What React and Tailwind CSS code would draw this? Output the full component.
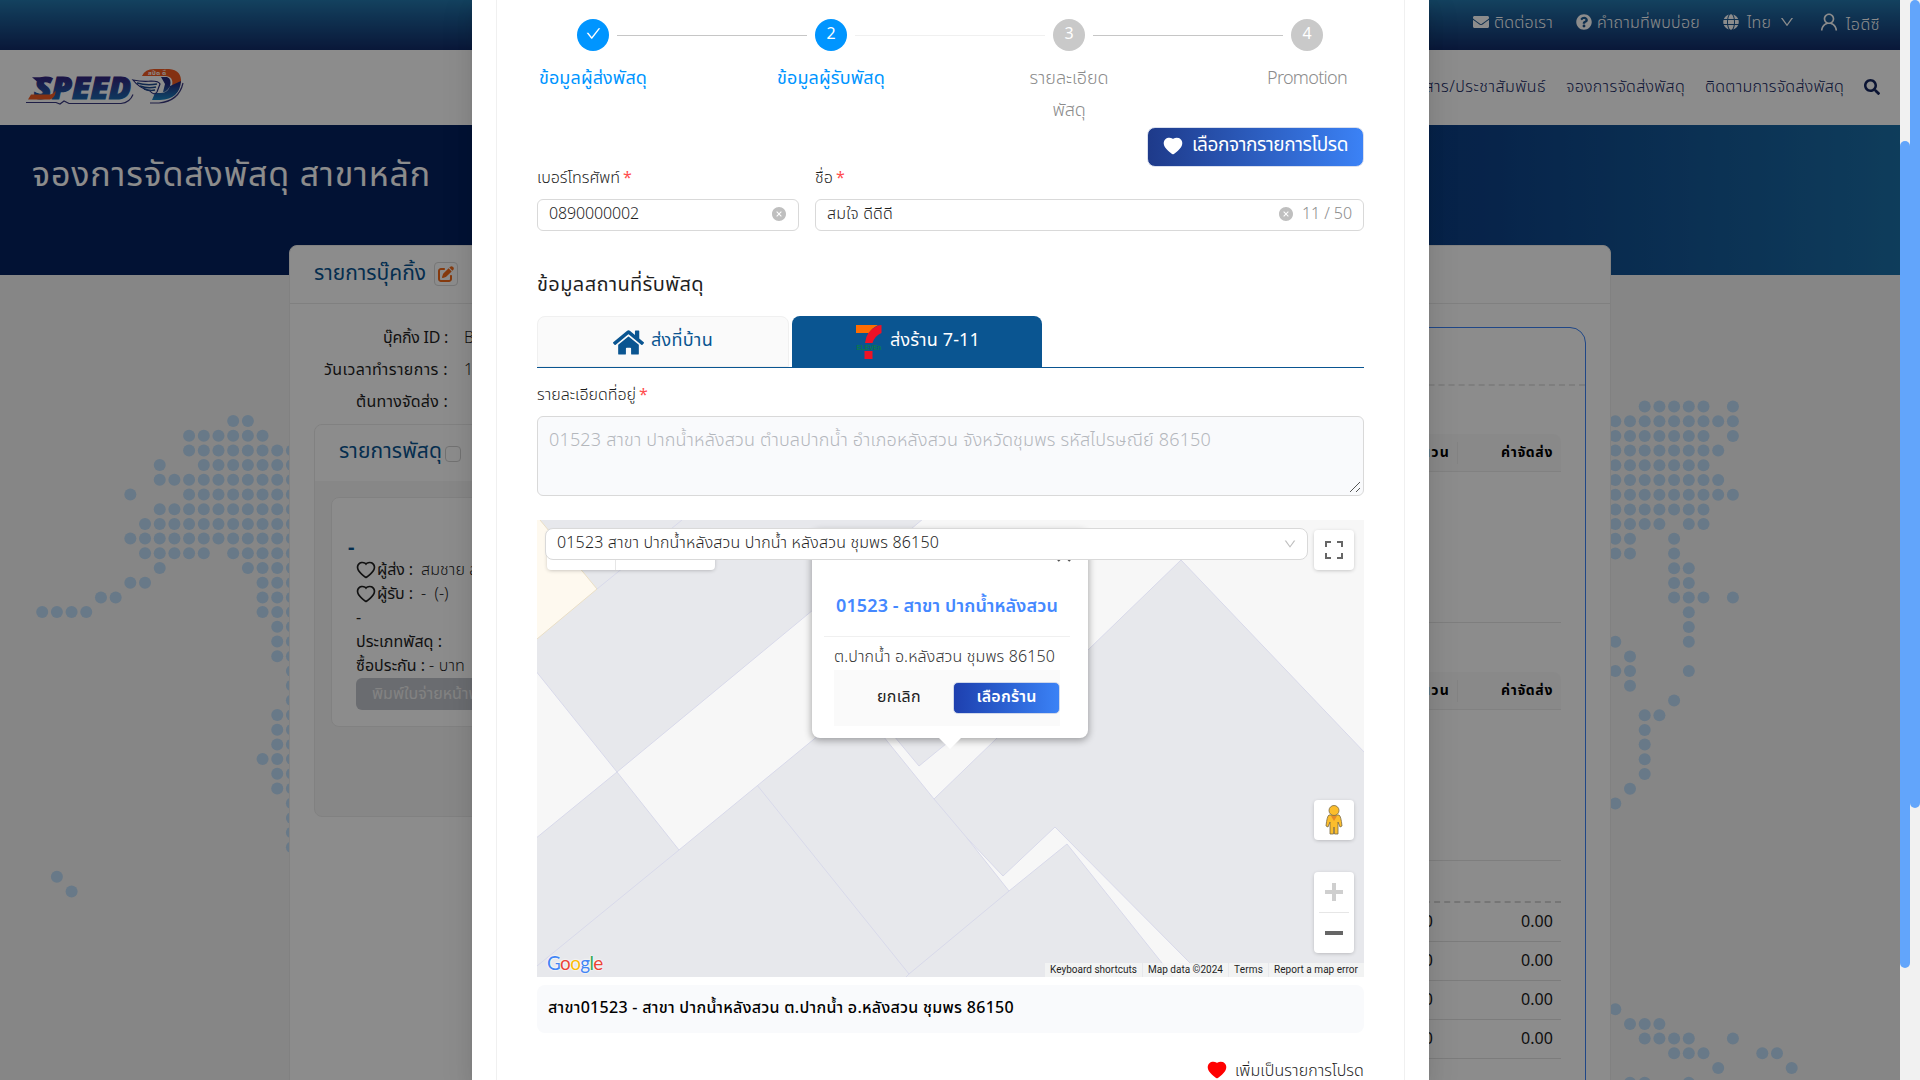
import React, { useLayoutEffect, useRef, useState } from "react";
import { FaEnvelope, FaQuestionCircle, FaGlobe, FaSearch, FaHome } from "react-icons/fa";
import { FaPenToSquare } from "react-icons/fa6";
import {
  AiOutlineUser,
  AiOutlineDown,
  AiOutlineCheck,
  AiFillCloseCircle,
  AiFillHeart,
  AiOutlineHeart,
} from "react-icons/ai";

/* Text whose letter spacing is computed so that it fills the given width. */
function T({ w, className = "", children }) {
  const ref = useRef(null);
  const [ls, setLs] = useState(0);
  useLayoutEffect(() => {
    if (!w || !ref.current) return;
    const el = ref.current;
    el.style.letterSpacing = "0px";
    const a = el.getBoundingClientRect().width;
    el.style.letterSpacing = "1px";
    const b = el.getBoundingClientRect().width;
    const next = b > a ? (w - a) / (b - a) : 0;
    el.style.letterSpacing = next + "px";
    setLs(next);
  }, [w]);
  return (
    <span ref={ref} className={"inline-block whitespace-nowrap " + className} style={{ letterSpacing: ls + "px" }}>
      {children}
    </span>
  );
}

const span = (a, b) => Array.from({ length: b - a + 1 }, (_, i) => a + i);
const LEFT_DOTS = [
  [13, 14], span(10, 15), span(10, 17), [8, ...span(11, 17)], span(8, 17), [6, ...span(10, 17)],
  span(8, 17), span(7, 17), span(6, 17), [...span(7, 11), ...span(13, 17)], [8, ...span(14, 17)],
  [6, 7, 15, 16, 17], [4, 5, 15, 16, 17], [0, 1, 2, 3, 15, 16, 17], [16, 17], [16, 17], [16, 17],
  [17], [17], [17], [16, 17], [16, 17], [16, 17], [15, 16, 17], [16, 17], [16, 17],
  [17], [17], [17], [17], [], [1], [2],
];
const RIGHT_DOTS = [
  [2, 3, 4, 5, 6, 8], span(0, 8), [...span(0, 6), 8], span(0, 7), span(0, 6), span(0, 7), span(0, 8),
  span(0, 6), [0, 1, 2, 3, 5, 6], [0, 1, 4], [0, 1, 4], [4, 5], [4, 5], [4, 5, 6, 8], [5], [5],
  [0, 5], [1], [0, 1, 5], [1], [4], [2, 3], [2], [2], [2], [2], [1], [0],
  [], [], [], [], [], [], [], [], [], [], [], [], [],
  [0], [1, 2, 3], [2, 3, 4, 5, 8], [4, 5, 6, 10, 11], [7, 12], [1, 2, 5],
];

function WorldDots() {
  return (
    <svg className="absolute inset-0" width="1900" height="1080" fill="#bddcf7">
      {LEFT_DOTS.map((r, j) => r.map((c) => <circle key={"l" + j + "-" + c} cx={42.2 + c * 14.69} cy={421 + j * 14.7} r="6" />))}
      {RIGHT_DOTS.map((r, j) => r.map((c) => <circle key={"r" + j + "-" + c} cx={1615.3 + c * 14.7} cy={406.5 + j * 14.7} r="6" />))}
    </svg>
  );
}

function Logo() {
  return (
    <svg width="160" height="44" viewBox="0 -2 160 44" className="overflow-visible">
      <defs>
        <linearGradient id="spd" x1="0" y1="0" x2="0" y2="1">
          <stop offset="0.25" stopColor="#33257f" />
          <stop offset="0.9" stopColor="#1773b5" />
        </linearGradient>
        <linearGradient id="dee" x1="0" y1="0" x2="0" y2="1">
          <stop offset="0.3" stopColor="#232a7c" />
          <stop offset="1" stopColor="#1c86c4" />
        </linearGradient>
      </defs>
      <path d="M6 8H101l8 5-3 15-8 6H44l-3 2H38l-4-2H1l4-9 6-5z" fill="#fff" />
      <path d="M1 34.500H31l4 1.500 4-3 5 2.500H96q9-1 12-9" fill="none" stroke="#3a3a80" strokeWidth="1.200" />
      <path d="M7 9.200h18l-3 4.300H12z" fill="#33257f" />
      <text x="9" y="31" fontFamily="'Noto Sans','Open Sans',sans-serif" fontWeight="900" fontStyle="italic" fontSize="29.500" textLength="97" lengthAdjust="spacingAndGlyphs" fill="url(#spd)" stroke="url(#spd)" strokeWidth="1.200">SPEED</text>
      <path d="M6 26.500H25Q29 26 30.500 22.500 31 28 27 30.500L25 31.500H3z" fill="#f05a22" />
      <path d="M118 7q4-7 13-7h14q13 1 13 12-1 10-8 17-7 6-16 6h-9" fill="#fff" />
      <path d="M125 35h9q20-2 24-20" fill="none" stroke="#3a3a80" strokeWidth="1.200" />
      <path d="M117 8q3-7 12-7h15q13 1 12 14l-9 3q2-10-7-10z" fill="#f05a22" />
      <path d="M136 9h6q5 2 3 9-3 6-7 6l2-8zM145 18l11-5q-1 18-21 19h-8l3-7h6q7 0 9-7z" fill="url(#dee)" />
      <path d="M108 12q10 2 18 1 8 0 9 3l-3 8q-3 4-7-1-11-3-17-11z" fill="#fff" stroke="#232a7c" strokeWidth="1.200" />
      <path d="M112 15q10 3 20 1M115 18q8 3 16 1M119 21q6 2 11 1" fill="none" stroke="#1d4a8c" strokeWidth="1.400" />
      <text x="123" y="6.500" fontFamily="'Noto Sans Thai',sans-serif" fontWeight="700" fontSize="6" textLength="18" fill="#fff">สปีด ดี</text>
    </svg>
  );
}

function Page() {
  return (
    <div className="relative flex h-[1080px] w-[1900px] flex-col overflow-hidden bg-[#f4f4f4]">
      <WorldDots />
      <header className="relative flex h-[50px] shrink-0 items-center justify-end bg-gradient-to-b from-[#2478ad] to-[#122b68] pb-1.5 pr-5 font-light text-white">
        <FaEnvelope size={16} />
        <T w={59} className="ml-[5px] pt-px">ติดต่อเรา</T>
        <FaQuestionCircle size={16} className="ml-[23px]" />
        <T w={103} className="ml-[5px] pt-px">คำถามที่พบบ่อย</T>
        <FaGlobe size={16} className="ml-[23px]" />
        <T w={24} className="ml-2 pt-px">ไทย</T>
        <AiOutlineDown size={16} className="ml-[8px]" />
        <AiOutlineUser size={22} className="ml-[23px]" />
        <T w={34} className="ml-[6px] pt-[5px]">ไอดีซี</T>
      </header>
      <nav className="relative flex h-[75px] shrink-0 items-center bg-white pl-[25px] pr-5 text-[#14265f]">
        <Logo />
        <div className="ml-auto flex items-center gap-5 pb-px">
          <T w={146} className="pb-px font-light">ข่าวสาร/ประชาสัมพันธ์</T>
          <T w={119} className="pb-px font-light">จองการจัดส่งพัสดุ</T>
          <T w={139} className="pb-px font-light">ติดตามการจัดส่งพัสดุ</T>
          <FaSearch size={16} />
        </div>
      </nav>
      <div className="relative h-[150px] shrink-0 bg-[linear-gradient(90deg,#052160_0%,#052160_40%,#0d4187_78%,#1b6fa7_100%)] pl-8 pt-[27px] text-[34px] leading-[48px] text-white">
        <T w={399}>จองการจัดส่งพัสดุ สาขาหลัก</T>
      </div>
      <main className="relative -mt-[30px] ml-[289px] h-[900px] w-[1322px] shrink-0 rounded-t-lg border border-[#ececec] bg-white">
        <div className="flex h-[58px] items-center border-b border-[#eaeaea] pb-0.5 pl-6 text-[21px] text-[#0a5591]">
          <T w={112}>รายการบุ๊คกิ้ง</T>
          <span className="ml-2 flex h-6 w-6 items-center justify-center rounded border border-[#d9d9d9] text-[#f26a1b]">
            <FaPenToSquare size={16} />
          </span>
        </div>
        <div className="flex justify-between pl-6 pr-6">
          <BookingColumn />
          <PriceColumn />
        </div>
      </main>
    </div>
  );
}

function BookingColumn() {
  return (
    <section className="w-[600px] pt-[18px] text-[#1f1f1f]">
      {[["บุ๊คกิ้ง ID :", 65, "B2024"], ["วันเวลาทำรายการ :", 124, "1"], ["ต้นทางจัดส่ง :", 92, ""]].map(([l, w, v]) => (
        <div key={l} className="flex h-8 items-center">
          <div className="flex w-[134px] justify-end"><T w={w}>{l}</T></div>
          <span className="ml-[16px] font-light">{v}</span>
        </div>
      ))}
      <div className="mt-[6px] h-[393px] overflow-hidden rounded-lg border border-[#ebebeb] bg-[#f6f6f6]">
        <div className="flex h-[56px] items-center bg-white pb-[3px] pl-6 text-[21px] text-[#0a5591]">
          <T w={103}>รายการพัสดุ</T>
          <span className="ml-[3px] mt-1 h-4 w-4 rounded border border-[#d0d0d0]" />
        </div>
        <div className="ml-4 mt-4 h-[230px] rounded-lg border border-[#ececec] bg-white pl-[24px] pt-[36px] leading-6">
          <div className="-ml-2 h-[24px] text-xl font-bold text-[#0a5591]">-</div>
          <div className="flex h-6 items-center"><AiOutlineHeart size={22} className="-ml-px" /><T w={36}>ผู้ส่ง :</T><span className="ml-2 font-light"><T w={44}>สมชาย</T> ส</span></div>
          <div className="flex h-6 items-center"><AiOutlineHeart size={22} className="-ml-px" /><T w={36}>ผู้รับ :</T><span className="ml-2 whitespace-pre font-light">-  (-)</span></div>
          <div className="h-6">-</div>
          <div className="h-6"><T w={86}>ประเภทพัสดุ :</T></div>
          <div className="h-6"><T w={69}>ซื้อประกัน :</T><T w={36} className="ml-1 font-light">- บาท</T></div>
          <div className="flex h-8 w-[240px] items-center rounded-md bg-[#c2c5cc] pl-4 text-[#eeeeee]"><T>พิมพ์ใบจ่ายหน้าพัสดุ</T></div>
        </div>
      </div>
    </section>
  );
}

function TableHead() {
  return (
    <div className="flex h-[38px] items-center justify-end rounded-t-lg border-b border-[#ebebeb] bg-[#fafafa] pr-2 text-sm font-bold text-black">
      <T w={44}>จำนวน</T>
      <span className="ml-[7px] h-[22px] w-px bg-[#eeeeee]" />
      <span className="flex w-[95px] justify-end"><T w={52}>ค่าจัดส่ง</T></span>
    </div>
  );
}

function PriceColumn() {
  return (
    <section className="mt-[23px] h-[800px] w-[600px] rounded-2xl border border-[#3b82f6]">
      <div className="h-[58px] border-b-2 border-dashed border-[#e5e5e5]" />
      <div className="ml-6 mr-6 pt-[48px]">
        <TableHead />
        <div className="h-[151px] border-b border-[#e5e5e5]" />
        <div className="h-[49px]" />
        <TableHead />
        <div className="h-[151px] border-b border-[#e5e5e5]" />
        <div className="h-[42px] border-b-2 border-dashed border-[#d8d8d8]" />
        {[0, 1, 2, 3].map((i) => (
          <div key={i} className="flex h-[39px] items-center justify-end border-b border-[#e2e2e2] pr-2 text-[#1a1a1a]">
            <span>0.00</span>
            <span className="flex w-[120px] justify-end"><T w={32}>0.00</T></span>
          </div>
        ))}
      </div>
    </section>
  );
}

function Step({ n, active, done, children }) {
  return (
    <div className={"flex w-[108px] shrink-0 flex-col items-center " + (active || done ? "text-[#0095ff]" : "text-[#8c8c8c]")}>
      <div className={"flex h-8 w-8 items-center justify-center rounded-full pb-[2px] text-white " + (active || done ? "bg-[#0095ff]" : "bg-[#c9c9c9]")}>
        {done ? <AiOutlineCheck size={17} className="mb-[2px]" /> : <span className="text-base leading-none">{n}</span>}
      </div>
      <div className="mt-[12px] flex flex-col items-center text-lg leading-8">{children}</div>
    </div>
  );
}

const Line = ({ light }) => <div className={"-mx-[30px] mt-4 h-px w-[190px] shrink-0 " + (light ? "bg-[#f0f0f0]" : "bg-[#c6c6c6]")} />;

function SevenEleven() {
  return (
    <svg width="28" height="36" viewBox="-2 -1 28 36">
      <path d="M0 0h22q-6 3-9 8H0z" fill="#ff6c00" />
      <path d="M25.500 0v8q-7 3-9 10H9Q10 6 22 0.500z" fill="#ee1226" />
      <path d="M8.500 26h8v8h-8z" fill="#ee1226" />
      <text x="0.500" y="24.800" fontFamily="'Liberation Sans',sans-serif" fontWeight="700" fontSize="8" textLength="25" lengthAdjust="spacingAndGlyphs" fill="#0a7a4b">ELEVEn</text>
    </svg>
  );
}

function MapCanvas() {
  return (
    <svg width="827" height="457" viewBox="0 0 827 457" className="block" stroke="#d8d9ea" strokeWidth="1">
      <rect width="827" height="457" fill="#e7e8ec" stroke="none" />
      <path d="M0 0H3L60 69 0 119z" fill="#fef9ef" stroke="none" />
      <path d="M3 0L60 69 0 119" fill="none" stroke="#eadfc6" />
      <path d="M60 69L145 0M220 265L372 454 369 457M372 454L472 371M142 330L0 446" fill="none" />
      <path d="M-2 150L80 252-2 319z" fill="#f7f7f7" />
      <path d="M80 252L386 -1H829V234L644 40 397 279 346 216 310 192 142 330z" fill="#f7f7f7" />
      <path d="M352 210L382 246 415 219z" fill="#e7e8ec" />
      <path d="M397 279L430 318 466 356 518 307 653 443 666 458H637L530 324 472 371 430 318" fill="#f7f7f7" />
    </svg>
  );
}

function Pegman() {
  return (
    <svg width="18" height="32" viewBox="0 0 18 32" stroke="#7a6a45" strokeWidth="0.800">
      <path d="M4 11h10q2 1 3 11l-2 1-2-5v12H9.500l-.5-7-.5 7H5V18l-2 5-2-1q1-10 3-11z" fill="#fbbd2c" />
      <circle cx="9" cy="6.500" r="5" fill="#fbbd2c" />
      <path d="M6 12h6l-3 5z" fill="#e58a2a" stroke="none" />
    </svg>
  );
}

function GoogleMark() {
  return (
    <div className="absolute bottom-[2px] left-[10px] text-[19px] leading-6 tracking-[-0.7px] [font-family:Lato,sans-serif] [text-shadow:0_0_2px_#fff,0_0_2px_#fff]">
      <span className="text-[#4285f4]">G</span><span className="text-[#ea4335]">o</span><span className="text-[#fbbc05]">o</span>
      <span className="text-[#4285f4]">g</span><span className="text-[#34a853]">l</span><span className="text-[#ea4335]">e</span>
    </div>
  );
}

function InfoWindow() {
  return (
    <div className="absolute left-[275px] top-[10px] h-[208px] w-[276px] rounded-lg bg-white px-3 pt-[50px] shadow-[0_2px_7px_1px_rgba(0,0,0,0.3)]">
      <svg width="24" height="13" className="absolute left-[126px] top-[207px]"><path d="M0 0H24L12 12z" fill="#fff" /></svg>
      <svg width="14" height="14" className="absolute left-[245px] top-[18px]" stroke="#555" strokeWidth="2.200"><path d="M1 1L13 13M13 1L1 13" /></svg>
      <div className="flex h-[57px] w-[246px] items-center justify-center border-b border-[#f0f0f0] pb-[3px] text-lg text-[#4488ff]">
        <T w={222} className="font-semibold">01523 - สาขา ปากน้ำหลังสวน</T>
      </div>
      <div className="ml-[10px] flex h-[33px] items-center pt-[7px] font-light text-[#333]">
        <T w={221}>ต.ปากน้ำ อ.หลังสวน ชุมพร 86150</T>
      </div>
      <div className="ml-[10px] flex h-[56px] w-[226px] items-center justify-end bg-[#fafafa]">
        <T w={44} className="mr-[32px] pb-[2px] text-[#222]">ยกเลิก</T>
        <div className="flex h-8 w-[107px] items-center justify-center rounded-[5px] border border-[#d0d8ea] bg-gradient-to-r from-[#1e40af] to-[#3b82f6] pb-[2px] text-white">
          <T w={60} className="font-semibold">เลือกร้าน</T>
        </div>
      </div>
    </div>
  );
}

function MapBox() {
  return (
    <div className="relative mt-6 h-[457px] overflow-hidden">
      <MapCanvas />
      <div className="absolute left-[10px] top-[10px] flex h-10 w-[168px] rounded-sm bg-white shadow-[0_1px_4px_-1px_rgba(0,0,0,0.3)]">
        <span className="ml-[68px] w-px bg-[#e6e6e6]" />
      </div>
      <InfoWindow />
      <div className="absolute left-[8px] top-[8px] flex h-8 w-[763px] items-center justify-between rounded-lg border border-[#d9d9d9] bg-white pb-[3px] pl-[11px] pr-[10px] font-light text-[#1f1f1f]">
        <T w={382}>01523 สาขา ปากน้ำหลังสวน ปากน้ำ หลังสวน ชุมพร 86150</T>
        <AiOutlineDown size={14} className="mt-0.5 text-[#bfbfbf]" />
      </div>
      <div className="absolute left-[777px] top-[10px] flex h-10 w-10 items-center justify-center rounded-sm bg-white shadow-[0_1px_4px_-1px_rgba(0,0,0,0.3)]">
        <svg width="18" height="18" fill="none" stroke="#666" strokeWidth="2"><path d="M6 1H1V6M12 1H17V6M6 17H1V12M12 17H17V12" /></svg>
      </div>
      <div className="absolute left-[777px] top-[280px] flex h-10 w-10 items-center justify-center rounded-sm bg-white shadow-[0_1px_4px_-1px_rgba(0,0,0,0.3)]">
        <Pegman />
      </div>
      <div className="absolute left-[777px] top-[352px] flex h-[81px] w-10 flex-col items-center rounded-sm bg-white shadow-[0_1px_4px_-1px_rgba(0,0,0,0.3)]">
        <svg width="18" height="18" className="mt-[11px]" fill="#cfcfcf"><path d="M7 0h4v7h7v4h-7v7H7v-7H0V7h7z" /></svg>
        <span className="mt-[11px] h-px w-[30px] bg-[#e6e6e6]" />
        <span className="mt-[18px] h-1 w-[18px] bg-[#666]" />
      </div>
      <GoogleMark />
      <div className="absolute bottom-0 right-0 flex h-[14px] items-center gap-px text-[10px] leading-[14px] text-[#1f1f1f] [font-family:Roboto,sans-serif]">
        <span className="bg-[#f5f5f5]/80 px-[5px]"><T w={87}>Keyboard shortcuts</T></span>
        <span className="bg-[#f5f5f5]/80 px-[5px]"><T w={75}>Map data ©2024</T></span>
        <span className="bg-[#f5f5f5]/80 px-[5px]"><T w={29}>Terms</T></span>
        <span className="bg-[#f5f5f5]/80 pl-[5px] pr-[6px]"><T w={84}>Report a map error</T></span>
      </div>
    </div>
  );
}

function Field({ label, w, className, children }) {
  return (
    <div className={className}>
      <div className="flex h-8 items-center gap-[3px] pb-[10px] text-[#1f1f1f]"><T w={w} className="font-light">{label}</T><span className="text-[#ff4d4f]">*</span></div>
      {children}
    </div>
  );
}

const INPUT = "flex h-8 items-center justify-between rounded-md border border-[#d9d9d9] px-[11px] pb-[2px] font-light text-[#1f1f1f]";

function Modal() {
  return (
    <div className="absolute left-[472px] top-0 h-[1080px] w-[957px] overflow-hidden bg-white px-6 shadow-[0_6px_16px_0_rgba(0,0,0,0.08),0_3px_6px_-4px_rgba(0,0,0,0.12),0_9px_28px_8px_rgba(0,0,0,0.05)]">
      <div className="h-[1200px] border-x border-[#f0f0f0] px-10">
        <div className="flex h-[127px] items-start pl-[2px] pt-[19px]">
          <Step done><T w={108}>ข้อมูลผู้ส่งพัสดุ</T></Step>
          <Line />
          <Step n="2" active><T w={108}>ข้อมูลผู้รับพัสดุ</T></Step>
          <Line light />
          <Step n="3"><T w={79} className="font-light">รายละเอียด</T><T w={33} className="font-light">พัสดุ</T></Step>
          <Line />
          <Step n="4"><T w={80} className="font-light">Promotion</T></Step>
        </div>
        <div className="flex justify-end">
          <div className="flex h-10 w-[217px] items-center rounded-lg border border-[#d9dfee] bg-gradient-to-r from-[#1e3a8a] to-[#3b82f6] pb-[2px] pl-[14px] text-[19px] text-white">
            <AiFillHeart size={22} /><T w={156} className="ml-2">เลือกจากรายการโปรด</T>
          </div>
        </div>
        <div className="flex gap-4">
          <Field label="เบอร์โทรศัพท์" w={83} className="w-[262px]">
            <div className={INPUT}><T w={90}>0890000002</T><AiFillCloseCircle size={16} className="text-[#bfbfbf]" /></div>
          </Field>
          <Field label="ชื่อ" w={18} className="flex-1">
            <div className={INPUT}>
              <T w={66}>สมใจ ดีดีดี</T>
              <span className="flex items-center gap-2 text-[#8c8c8c]"><AiFillCloseCircle size={16} className="text-[#bfbfbf]" /><T w={50}>11 / 50</T></span>
            </div>
          </Field>
        </div>
        <div className="mt-[36px] h-[49px] text-xl leading-9 text-[#1f1f1f]"><T w={167}>ข้อมูลสถานที่รับพัสดุ</T></div>
        <div className="flex h-[52px] gap-[3px] border-b border-[#0a5591] text-lg">
          <div className="flex w-[252px] items-center justify-center gap-[7px] rounded-t-lg border border-[#f0f0f0] bg-[#fafafa] text-[#0a5591]"><FaHome size={31} className="mt-px" /><T w={62} className="pb-px">ส่งที่บ้าน</T></div>
          <div className="flex w-[250px] items-center justify-center gap-2 rounded-t-lg bg-[#0a5591] text-white"><SevenEleven /><T w={90} className="pb-[2px]">ส่งร้าน 7-11</T></div>
        </div>
        <div className="flex h-[48px] items-center gap-[3px] pt-[6px] text-[#1f1f1f]"><T w={99} className="font-light">รายละเอียดที่อยู่</T><span className="text-[#ff4d4f]">*</span></div>
        <div className="relative h-[80px] rounded-md border border-[#d9d9d9] bg-[#f9fafc] pl-[11px] pt-[10px] text-lg font-light text-[#b4b7bc]">
          <T w={662}>01523 สาขา ปากน้ำหลังสวน ตำบลปากน้ำ อำเภอหลังสวน จังหวัดชุมพร รหัสไปรษณีย์ 86150</T>
          <svg width="12" height="12" className="absolute bottom-0.5 right-0.5" stroke="#555" strokeWidth="1"><path d="M1 11L11 1M7 11L11 7" /></svg>
        </div>
        <MapBox />
        <div className="mt-2 flex h-[48px] items-center rounded-lg bg-[#f9fafc] pl-[11px] text-black"><T w={466} className="pb-[2px] font-medium">สาขา01523 - สาขา ปากน้ำหลังสวน ต.ปากน้ำ อ.หลังสวน ชุมพร 86150</T></div>
        <div className="mt-[24px] flex items-center justify-end text-[#1f1f1f]"><AiFillHeart size={22} className="text-[#ff0000]" /><T w={129} className="ml-[7px] pt-[2px] font-light">เพิ่มเป็นรายการโปรด</T></div>
      </div>
    </div>
  );
}

export default function App() {
  return (
    <div className="relative flex h-[1080px] w-[1920px] overflow-hidden bg-white text-base [font-family:'Noto_Sans_Thai','Noto_Sans',sans-serif]">
      <div className="relative w-[1900px]">
        <Page />
        <div className="absolute inset-0 bg-black/45" />
        <Modal />
      </div>
      <div className="w-[10px] bg-[#f1f1f1] pt-[141px]"><div className="h-[827px] rounded-full bg-[#62a5fb]" /></div>
      <div className="w-[10px] bg-[#f1f1f1]"><div className="h-[808px] rounded-full bg-[#62a5fb]" /></div>
    </div>
  );
}
